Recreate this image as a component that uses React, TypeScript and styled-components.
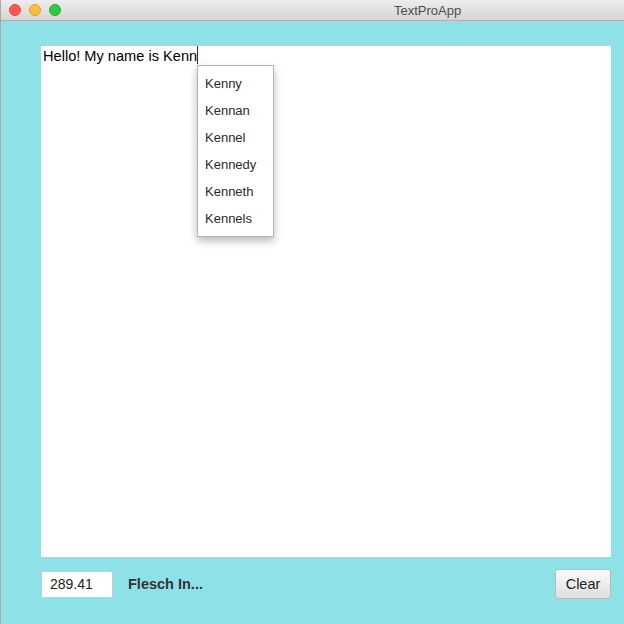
import React from "react";
import styled, { createGlobalStyle } from "styled-components";

const Global = createGlobalStyle`
  html, body { margin: 0; padding: 0; width: 624px; height: 624px; overflow: hidden; }
  body { font-family: "Liberation Sans", Arial, sans-serif; }
`;

const Window = styled.div`
  width: 624px;
  height: 624px;
  display: flex;
  flex-direction: column;
  box-sizing: border-box;
  border-left: 1px solid #a9a9a9;
  background: #8fe1e8;
`;

const TitleBar = styled.div`
  height: 20px;
  flex: none;
  display: flex;
  align-items: center;
  position: relative;
  background: linear-gradient(#ededed, #d5d5d5);
  border-bottom: 1px solid #b0b0b0;
`;

const Lights = styled.div`
  display: flex;
  gap: 8px;
  padding-left: 8px;
`;

const Light = styled.span<{ $c: string; $b: string }>`
  width: 12px;
  height: 12px;
  border-radius: 50%;
  box-sizing: border-box;
  background: ${(p) => p.$c};
  border: 0.5px solid ${(p) => p.$b};
`;

const Title = styled.div`
  position: absolute;
  left: 393px;
  top: 0;
  height: 20px;
  line-height: 21px;
  font-size: 13px;
  color: #4d4d4d;
`;

const Content = styled.div`
  flex: 1;
  display: flex;
  flex-direction: column;
  padding: 25px 13px 0 40px;
`;

const Editor = styled.div`
  position: relative;
  height: 511px;
  background: #fff;
  padding: 2px 2px;
  box-sizing: border-box;
  font-size: 14.6px;
  color: #000;
`;

const Line = styled.div`
  display: flex;
  align-items: flex-start;
  line-height: 17px;
`;

const Caret = styled.span`
  display: inline-block;
  width: 1px;
  height: 18px;
  margin-top: -2px;
  background: #333;
`;

const Popup = styled.div`
  position: absolute;
  left: 156px;
  top: 19px;
  width: 77px;
  height: 172px;
  box-sizing: border-box;
  background: #fff;
  border: 1px solid #b6b6b6;
  box-shadow: 0 4px 8px rgba(0, 0, 0, 0.28);
  padding-top: 4px;
  display: flex;
  flex-direction: column;
`;

const Item = styled.div`
  height: 27px;
  line-height: 27px;
  padding-left: 7px;
  font-size: 13px;
  color: #2b2b2b;
`;

const Bottom = styled.div`
  display: flex;
  align-items: center;
  margin-top: 12px;
  height: 30px;
`;

const ScoreBox = styled.div`
  width: 72px;
  height: 27px;
  box-sizing: border-box;
  background: #fff;
  border: 1px solid #c9c9c9;
  border-radius: 2px;
  font-size: 14px;
  line-height: 25px;
  padding-left: 8px;
  color: #222;
`;

const Label = styled.div`
  margin-left: 15px;
  font-size: 14.5px;
  font-weight: bold;
  color: #333;
`;

const ClearButton = styled.button`
  margin-left: auto;
  width: 56px;
  height: 30px;
  box-sizing: border-box;
  border: 1px solid #b9b9b9;
  border-radius: 3px;
  background: linear-gradient(#fbfbfb, #dedede);
  font-family: "Liberation Sans", Arial, sans-serif;
  font-size: 14.5px;
  color: #222;
  padding: 0;
`;

const names = ["Kenny", "Kennan", "Kennel", "Kennedy", "Kenneth", "Kennels"];

export default function App() {
  return (
    <>
      <Global />
      <Window>
        <TitleBar>
          <Lights>
            <Light $c="#fc5753" $b="#df4744" />
            <Light $c="#fdbc40" $b="#de9f34" />
            <Light $c="#33c748" $b="#27aa35" />
          </Lights>
          <Title>TextProApp</Title>
        </TitleBar>
        <Content>
          <Editor>
            <Line>
              Hello! My name is Kenn
              <Caret />
            </Line>
            <Popup>
              {names.map((n) => (
                <Item key={n}>{n}</Item>
              ))}
            </Popup>
          </Editor>
          <Bottom>
            <ScoreBox>289.41</ScoreBox>
            <Label>Flesch In...</Label>
            <ClearButton>Clear</ClearButton>
          </Bottom>
        </Content>
      </Window>
    </>
  );
}
